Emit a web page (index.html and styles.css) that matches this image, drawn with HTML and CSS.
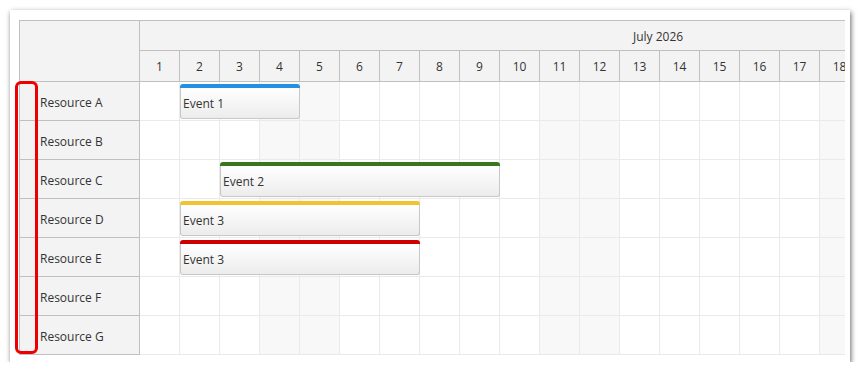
FILE: index.html
```html
<!DOCTYPE html>
<html>
<head>
<meta charset="utf-8">
<link rel="stylesheet" href="styles.css">
</head>
<body>
<div class="frame">
  <div class="scheduler">
    <div class="rowheaders">
      <div class="corner"></div>
      <div class="rh">Resource A</div>
      <div class="rh">Resource B</div>
      <div class="rh">Resource C</div>
      <div class="rh">Resource D</div>
      <div class="rh">Resource E</div>
      <div class="rh">Resource F</div>
      <div class="rh">Resource G</div>
    </div>
    <div class="timeline">
      <div class="month"><span class="month-label">July 2026</span></div>
      <div class="days">
        <div class="day">1</div><div class="day">2</div><div class="day">3</div><div class="day">4</div><div class="day">5</div><div class="day">6</div><div class="day">7</div><div class="day">8</div><div class="day">9</div><div class="day">10</div><div class="day">11</div><div class="day">12</div><div class="day">13</div><div class="day">14</div><div class="day">15</div><div class="day">16</div><div class="day">17</div><div class="day">18</div>
      </div>
      <div class="lane">
        <div class="c"></div><div class="c"></div><div class="c"></div><div class="c we"></div><div class="c we"></div><div class="c"></div><div class="c"></div><div class="c"></div><div class="c"></div><div class="c"></div><div class="c we"></div><div class="c we"></div><div class="c"></div><div class="c"></div><div class="c"></div><div class="c"></div><div class="c"></div><div class="c we"></div>
        <div class="event" style="left:40px;width:120px"><div class="bar blue"></div><div class="ebody">Event 1</div></div>
      </div>
      <div class="lane">
        <div class="c"></div><div class="c"></div><div class="c"></div><div class="c we"></div><div class="c we"></div><div class="c"></div><div class="c"></div><div class="c"></div><div class="c"></div><div class="c"></div><div class="c we"></div><div class="c we"></div><div class="c"></div><div class="c"></div><div class="c"></div><div class="c"></div><div class="c"></div><div class="c we"></div>
      </div>
      <div class="lane">
        <div class="c"></div><div class="c"></div><div class="c"></div><div class="c we"></div><div class="c we"></div><div class="c"></div><div class="c"></div><div class="c"></div><div class="c"></div><div class="c"></div><div class="c we"></div><div class="c we"></div><div class="c"></div><div class="c"></div><div class="c"></div><div class="c"></div><div class="c"></div><div class="c we"></div>
        <div class="event" style="left:80px;width:280px"><div class="bar green"></div><div class="ebody">Event 2</div></div>
      </div>
      <div class="lane">
        <div class="c"></div><div class="c"></div><div class="c"></div><div class="c we"></div><div class="c we"></div><div class="c"></div><div class="c"></div><div class="c"></div><div class="c"></div><div class="c"></div><div class="c we"></div><div class="c we"></div><div class="c"></div><div class="c"></div><div class="c"></div><div class="c"></div><div class="c"></div><div class="c we"></div>
        <div class="event" style="left:40px;width:240px"><div class="bar yellow"></div><div class="ebody">Event 3</div></div>
      </div>
      <div class="lane">
        <div class="c"></div><div class="c"></div><div class="c"></div><div class="c we"></div><div class="c we"></div><div class="c"></div><div class="c"></div><div class="c"></div><div class="c"></div><div class="c"></div><div class="c we"></div><div class="c we"></div><div class="c"></div><div class="c"></div><div class="c"></div><div class="c"></div><div class="c"></div><div class="c we"></div>
        <div class="event" style="left:40px;width:240px"><div class="bar red"></div><div class="ebody">Event 3</div></div>
      </div>
      <div class="lane">
        <div class="c"></div><div class="c"></div><div class="c"></div><div class="c we"></div><div class="c we"></div><div class="c"></div><div class="c"></div><div class="c"></div><div class="c"></div><div class="c"></div><div class="c we"></div><div class="c we"></div><div class="c"></div><div class="c"></div><div class="c"></div><div class="c"></div><div class="c"></div><div class="c we"></div>
      </div>
      <div class="lane">
        <div class="c"></div><div class="c"></div><div class="c"></div><div class="c we"></div><div class="c we"></div><div class="c"></div><div class="c"></div><div class="c"></div><div class="c"></div><div class="c"></div><div class="c we"></div><div class="c we"></div><div class="c"></div><div class="c"></div><div class="c"></div><div class="c"></div><div class="c"></div><div class="c we"></div>
      </div>
    </div>
  </div>
  <div class="highlight"></div>
</div>
</body>
</html>
```

FILE: styles.css
```css
* { box-sizing: border-box; }
html, body { margin: 0; padding: 0; background: #fff; }
body {
  font-family: "Open Sans", "Liberation Sans", sans-serif;
  font-size: 12px;
  color: #333;
}
.frame {
  position: relative;
  margin: 10px 0 0 10px;
  width: 840px;
  height: 352px;
  padding: 10px 0 0 9px;
  background: #fff;
  box-shadow: 1px 2px 5px rgba(0,0,0,0.6);
}
.scheduler {
  display: flex;
  width: 826px;
  height: 335px;
  border-top: 1px solid #c0c0c0;
  border-left: 1px solid #c0c0c0;
  overflow: hidden;
}
.rowheaders {
  width: 120px;
  flex-shrink: 0;
  border-right: 1px solid #c0c0c0;
  background: #f3f3f3;
  display: flex;
  flex-direction: column;
}
.corner {
  height: 61px;
  border-bottom: 1px solid #c0c0c0;
}
.rh {
  height: 39px;
  border-bottom: 1px solid #c0c0c0;
  padding-left: 20px;
  display: flex;
  align-items: center;
  padding-top: 3px;
}
.timeline {
  width: 705px;
  flex-shrink: 0;
  overflow: hidden;
  display: flex;
  flex-direction: column;
}
.month {
  height: 30px;
  border-bottom: 1px solid #c0c0c0;
  background: #f3f3f3;
  display: flex;
  align-items: center;
  padding-left: 493px;
  white-space: nowrap;
  padding-top: 1px;
}
.days {
  height: 31px;
  display: flex;
  border-bottom: 1px solid #c0c0c0;
  background: #f3f3f3;
}
.day {
  width: 40px;
  flex-shrink: 0;
  border-right: 1px solid #c0c0c0;
  display: flex;
  align-items: center;
  justify-content: center;
  padding-top: 1px;
}
.lane {
  position: relative;
  height: 39px;
  display: flex;
  border-bottom: 1px solid #eaeaea;
}
.c {
  width: 40px;
  flex-shrink: 0;
  border-right: 1px solid #eaeaea;
  background: #fff;
}
.c.we { background: #f8f8f8; }
.event {
  position: absolute;
  top: 2px;
  height: 35px;
  display: flex;
  flex-direction: column;
}
.bar {
  height: 4px;
  border-radius: 3px 3px 0 0;
}
.bar.blue { background: #2490e2; }
.bar.green { background: #38761d; }
.bar.yellow { background: #f1c232; }
.bar.red { background: #cc0000; }
.ebody {
  flex: 1;
  border: 1px solid #c8c8c8;
  border-top: none;
  border-radius: 0 0 3px 3px;
  background: linear-gradient(to bottom, #ffffff, #ececec);
  display: flex;
  align-items: center;
  padding-left: 2px;
  padding-top: 1px;
  white-space: nowrap;
}
.highlight {
  position: absolute;
  left: 5px;
  top: 71px;
  width: 23px;
  height: 273px;
  border: 3px solid #ee0000;
  border-radius: 6px;
}
```
